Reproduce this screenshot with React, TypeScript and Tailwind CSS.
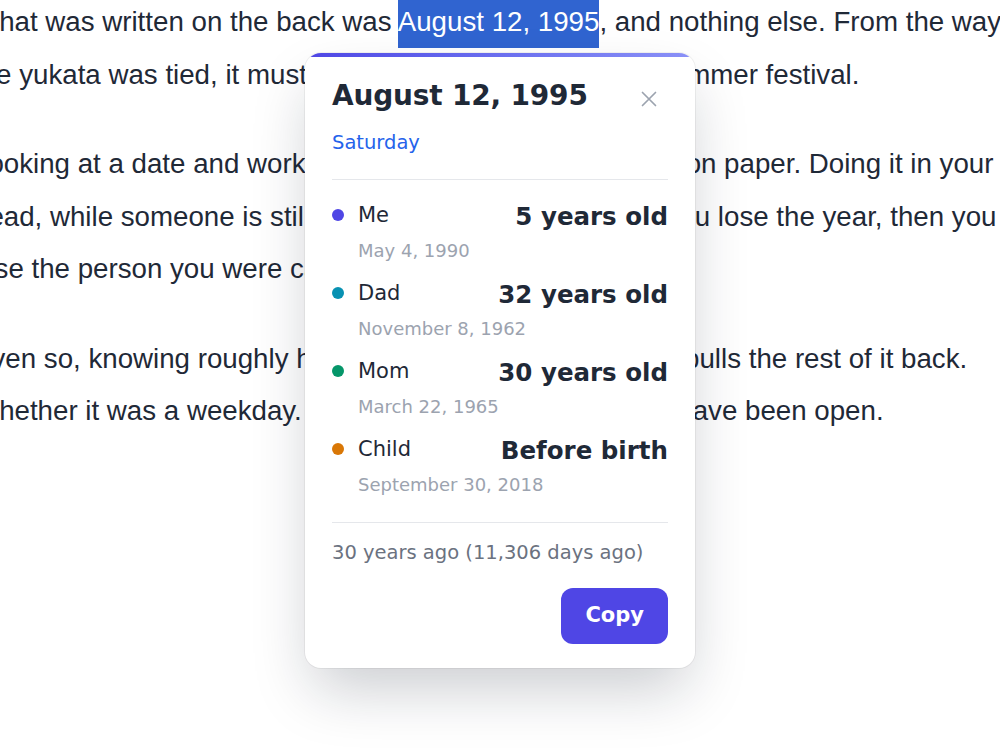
import React from "react";

type Person = {
  name: string;
  born: string;
  age: string;
  dot: string;
};

const people: Person[] = [
  { name: "Me", born: "May 4, 1990", age: "5 years old", dot: "bg-[#4f46e5]" },
  { name: "Dad", born: "November 8, 1962", age: "32 years old", dot: "bg-[#0891b2]" },
  { name: "Mom", born: "March 22, 1965", age: "30 years old", dot: "bg-[#059669]" },
  { name: "Child", born: "September 30, 2018", age: "Before birth", dot: "bg-[#d97706]" },
];

function CloseIcon() {
  return (
    <svg width="16" height="16" viewBox="0 0 16 16" fill="none" aria-hidden="true">
      <path d="M1.5 1.5L14.5 14.5M14.5 1.5L1.5 14.5" stroke="#9ca3af" strokeWidth="1.7" strokeLinecap="round" />
    </svg>
  );
}

function DatePopover() {
  return (
    <div className="absolute left-[305px] top-[53px] w-[390px] overflow-hidden whitespace-nowrap rounded-[16px] bg-white ring-1 ring-black/5 shadow-[0_28px_60px_-8px_rgba(15,23,42,0.22)] font-['DejaVu_Sans',sans-serif]">
      <div className="h-[4px] bg-linear-to-r from-[#4f46e5] to-[#8b91f7]" />
      <div className="flex flex-col px-[27px] pt-[22px] pb-[24px]">
        <div className="flex items-start justify-between">
          <h2 className="text-[28px] leading-[34px] font-bold tracking-[-0.2px] text-[#1f2937]">August 12, 1995</h2>
          <button className="mt-[4px] mr-[3px] flex h-[32px] w-[32px] items-center justify-center">
            <CloseIcon />
          </button>
        </div>
        <div className="mt-[13px] text-[19.5px] leading-[29px] text-[#2563eb]">Saturday</div>
        <div className="mt-[22px] h-px bg-[#e5e7eb]" />
        <div className="flex flex-col gap-[14px] pt-[20px]">
          {people.map((p) => (
            <div key={p.name} className="flex flex-col">
              <div className="flex h-[30px] items-start justify-between">
                <div className="flex items-center gap-[14px]">
                  <span className={`h-[12px] w-[12px] shrink-0 rounded-full ${p.dot}`} />
                  <span className="text-[21px] leading-[30px] text-[#1f2937]">{p.name}</span>
                </div>
                <span className="mt-[3px] text-[24.5px] leading-[27px] font-bold text-[#1f2937]">{p.age}</span>
              </div>
              <span className="mt-[7px] pl-[26px] text-[18px] leading-[27px] text-[#9ca3af]">{p.born}</span>
            </div>
          ))}
        </div>
        <div className="mt-[24px] h-px bg-[#e5e7eb]" />
        <div className="mt-[15px] text-[19.5px] leading-[29px] text-[#6b7280]">30 years ago (11,306 days ago)</div>
        <button className="mt-[21px] h-[56px] self-end rounded-[12px] bg-[#4f46e5] px-[24px] text-[21px] font-bold text-white">
          Copy
        </button>
      </div>
    </div>
  );
}

export default function App() {
  return (
    <div className="relative h-[750px] w-[1000px] overflow-hidden bg-white">
      <article className="ml-[-27px] mt-[-4px] whitespace-nowrap font-['Liberation_Sans',Arial,sans-serif] text-[27.7px] leading-[52.5px] text-[#1f2937]">
        <p className="mb-[37px]">
          What was written on the back was{" "}
          <span className="bg-[#3064d0] py-[11px] text-white">August 12, 1995</span>, and nothing else. From the way
          <br />
          the yukata was tied, it must have been taken during the summer festival.
        </p>
        <p className="mb-[37px]">
          Looking at a date and working out its weekday is not hard on paper. Doing it in your
          <br />
          head, while someone is still talking, is something else. If you lose the year, then you
          <br />
          lose the person you were calculating for.
        </p>
        <p>
          Even so, knowing roughly how old everyone was that day pulls the rest of it back.
          <br />
          Whether it was a weekday. Whether the shops would still have been open.
        </p>
      </article>
      <DatePopover />
    </div>
  );
}
